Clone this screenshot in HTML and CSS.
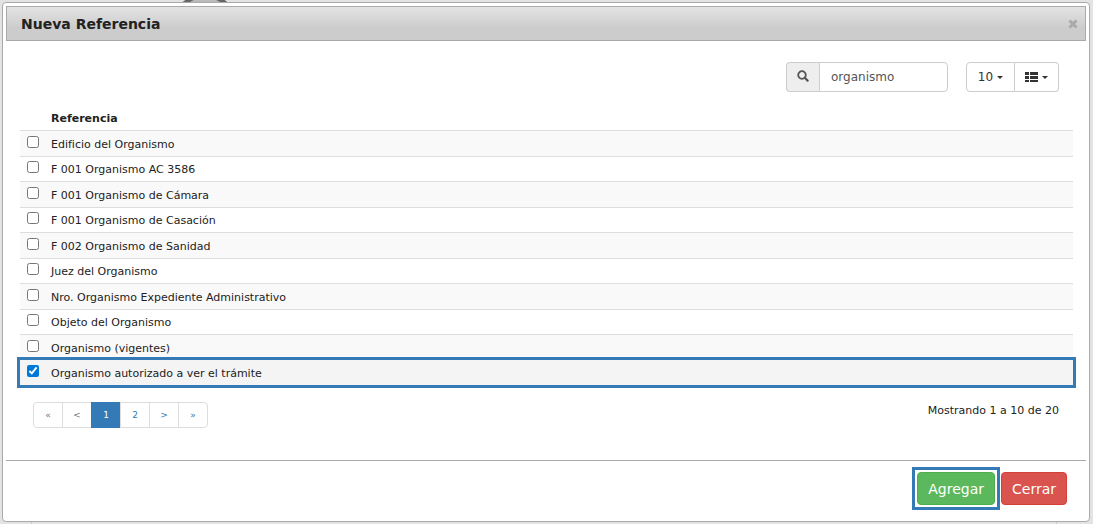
FILE: index.html
```html
<!DOCTYPE html>
<html lang="es">
<head>
  <meta charset="UTF-8">
  <meta name="viewport" content="width=device-width, initial-scale=1.0">
  <title>Nueva Referencia</title>
  <link rel="stylesheet" href="styles.css">
</head>
<body>
  <div class="page-circle"></div>
  <div class="page-line"></div>
  <div class="dialog" role="dialog" aria-labelledby="dialog-title">
    <header class="dialog-header">
      <h1 id="dialog-title">Nueva Referencia</h1>
      <button type="button" class="close" aria-label="Cerrar ventana">
        <svg width="10" height="10" viewBox="0 0 10 10"><path d="M1.5 1.5l7 7M8.5 1.5l-7 7" stroke="#aaa" stroke-width="3"/></svg>
      </button>
    </header>
    <main class="dialog-body">
      <div class="toolbar">
        <div class="search">
          <label for="buscar" aria-label="Buscar">
            <svg width="12" height="12" viewBox="0 0 12 12"><circle cx="5" cy="5" r="3.8" fill="none" stroke="#555" stroke-width="1.8"/><path d="M7.8 7.8l2.8 2.8" stroke="#555" stroke-width="2.2" stroke-linecap="round"/></svg>
          </label>
          <input type="text" id="buscar" value="organismo">
        </div>
        <div class="btn-group">
          <button type="button">10 <span class="caret"></span></button>
          <button type="button" aria-label="Columnas">
            <svg width="13" height="11" viewBox="0 0 13 11"><path d="M0 0h4v3H0zM5 0h8v3H5zM0 4h4v3H0zM5 4h8v3H5zM0 8h4v2H0zM5 8h8v2H5z" fill="#333"/></svg>
            <span class="caret"></span>
          </button>
        </div>
      </div>
      <table class="grid">
        <thead>
          <tr><th class="check"></th><th>Referencia</th></tr>
        </thead>
        <tbody>
          <tr><td class="check"><input type="checkbox" id="r1"></td><td><label for="r1">Edificio del Organismo</label></td></tr>
          <tr><td class="check"><input type="checkbox" id="r2"></td><td><label for="r2">F 001 Organismo AC 3586</label></td></tr>
          <tr><td class="check"><input type="checkbox" id="r3"></td><td><label for="r3">F 001 Organismo de Cámara</label></td></tr>
          <tr><td class="check"><input type="checkbox" id="r4"></td><td><label for="r4">F 001 Organismo de Casación</label></td></tr>
          <tr><td class="check"><input type="checkbox" id="r5"></td><td><label for="r5">F 002 Organismo de Sanidad</label></td></tr>
          <tr><td class="check"><input type="checkbox" id="r6"></td><td><label for="r6">Juez del Organismo</label></td></tr>
          <tr><td class="check"><input type="checkbox" id="r7"></td><td><label for="r7">Nro. Organismo Expediente Administrativo</label></td></tr>
          <tr><td class="check"><input type="checkbox" id="r8"></td><td><label for="r8">Objeto del Organismo</label></td></tr>
          <tr><td class="check"><input type="checkbox" id="r9"></td><td><label for="r9">Organismo (vigentes)</label></td></tr>
          <tr class="selected"><td class="check"><input type="checkbox" id="r10" checked></td><td><label for="r10">Organismo autorizado a ver el trámite</label></td></tr>
        </tbody>
      </table>
      <div class="grid-footer">
        <ul class="pagination">
          <li class="disabled"><a href="#">«</a></li>
          <li class="disabled"><a href="#">&lt;</a></li>
          <li class="active"><a href="#">1</a></li>
          <li><a href="#">2</a></li>
          <li><a href="#">&gt;</a></li>
          <li><a href="#">»</a></li>
        </ul>
        <p class="infos">Mostrando 1 a 10 de 20</p>
      </div>
    </main>
    <footer class="dialog-footer">
      <div class="highlight">
        <button type="button" class="btn btn-success">Agregar</button>
      </div>
      <button type="button" class="btn btn-danger">Cerrar</button>
    </footer>
  </div>
</body>
</html>
```

FILE: styles.css
```css
* {
  box-sizing: border-box;
}

body {
  margin: 0;
  padding: 2px 3px 2px 2px;
  min-height: 100vh;
  display: flex;
  background: #e3e3e3;
  color: #222;
  font-family: Verdana, "DejaVu Sans", sans-serif;
  font-size: 11px;
  overflow: hidden;
}

button,
input {
  font-family: inherit;
}

/* page content that shows round the dialog */
.page-circle {
  position: absolute;
  left: 170px;
  top: -6px;
  width: 70px;
  height: 70px;
  border: 4px solid #666;
  border-radius: 50%;
  background: #bbb;
}

.page-line {
  position: absolute;
  left: 31px;
  right: 36px;
  bottom: 0;
  height: 2px;
  border: solid #ccc;
  border-width: 0 1px;
}

.dialog {
  position: relative;
  flex: 1;
  display: flex;
  flex-direction: column;
  padding: 3px;
  border: 1px solid #aaa;
  border-radius: 4px;
  background: #fff;
}

.dialog-header {
  display: flex;
  align-items: center;
  justify-content: space-between;
  height: 35px;
  padding: 0 7px 0 14px;
  border: 1px solid #aaa;
  background: linear-gradient(#e3e3e3, #ccc 65%, #ccc);
}

.dialog-header h1 {
  margin: 0;
  font-size: 14px;
}

.close {
  display: flex;
  padding: 0;
  border: 0;
  background: none;
}

.dialog-body {
  flex: 1;
  padding: 21px 13px 0 14px;
}

.toolbar {
  display: flex;
  justify-content: flex-end;
  gap: 18px;
  padding-right: 14px;
}

.search {
  display: flex;
  height: 30px;
}

.search label {
  display: flex;
  align-items: center;
  justify-content: center;
  width: 33px;
  padding: 0 0 2px;
  border: 1px solid #ccc;
  border-right: 0;
  border-radius: 4px 0 0 4px;
  background: #eee;
}

.search input {
  width: 129px;
  padding: 0 11px;
  border: 1px solid #ccc;
  border-radius: 0 4px 4px 0;
  color: #555;
  font-size: 12px;
}

.btn-group {
  display: flex;
}

.btn-group button {
  display: flex;
  align-items: center;
  justify-content: center;
  gap: 4px;
  width: 49px;
  padding: 0;
  border: 1px solid #ccc;
  border-radius: 4px 0 0 4px;
  background: #fff;
  color: #333;
  font-size: 12px;
}

.btn-group button + button {
  width: 44px;
  border-left: 0;
  border-radius: 0 4px 4px 0;
}

.caret {
  border: 3px solid transparent;
  border-top-color: #333;
  border-bottom: 0;
}

.grid {
  width: 100%;
  margin-top: 13px;
  border-collapse: separate;
  border-spacing: 0;
}

.grid th,
.grid td {
  height: 25px;
  padding: 2px 5px 0 0;
  line-height: 14px;
  text-align: left;
}

.grid td {
  border-top: 1px solid #ddd;
}

.grid tbody tr:nth-child(odd) td {
  height: 26px;
  background: #f9f9f9;
}

.grid .check {
  width: 31px;
  padding: 0 0 4px 7px;
}

.check input {
  display: block;
  width: 12px;
  height: 12px;
  margin: 0;
  accent-color: #0078d7;
}

.grid .selected td {
  background: #f4f4f4;
  border-top: 0;
}

.selected {
  outline: 3px solid #337ab7;
}

.grid-footer {
  display: flex;
  justify-content: space-between;
  padding: 17px 14px 0 13px;
}

.pagination {
  display: flex;
  margin: 0;
  padding: 0;
  list-style: none;
}

.pagination a {
  display: block;
  width: 30px;
  height: 26px;
  margin-right: -1px;
  border: 1px solid #ddd;
  color: #337ab7;
  font-size: 9px;
  line-height: 24px;
  text-align: center;
  text-decoration: none;
}

.pagination .disabled a {
  color: #777;
}

.pagination .active a {
  border-color: #337ab7;
  background: #337ab7;
  color: #fff;
}

.pagination li:first-child a {
  border-radius: 4px 0 0 4px;
}

.pagination li:last-child a {
  margin-right: 0;
  border-radius: 0 4px 4px 0;
}

.infos {
  margin: 0;
  line-height: 18px;
}

.dialog-footer {
  display: flex;
  align-items: center;
  justify-content: flex-end;
  gap: 1px;
  height: 58px;
  padding: 0 19px 2px 0;
  border-top: 1px solid #aaa;
}

.highlight {
  padding: 2px;
  border: 3px solid #337ab7;
}

.btn {
  display: block;
  height: 33px;
  padding: 0 10px;
  border: 1px solid;
  border-radius: 4px;
  color: #fff;
  font-size: 14px;
}

.btn-success {
  border-color: #4cae4c;
  background: #5cb85c;
}

.btn-danger {
  border-color: #d43f3a;
  background: #d9534f;
}
```
